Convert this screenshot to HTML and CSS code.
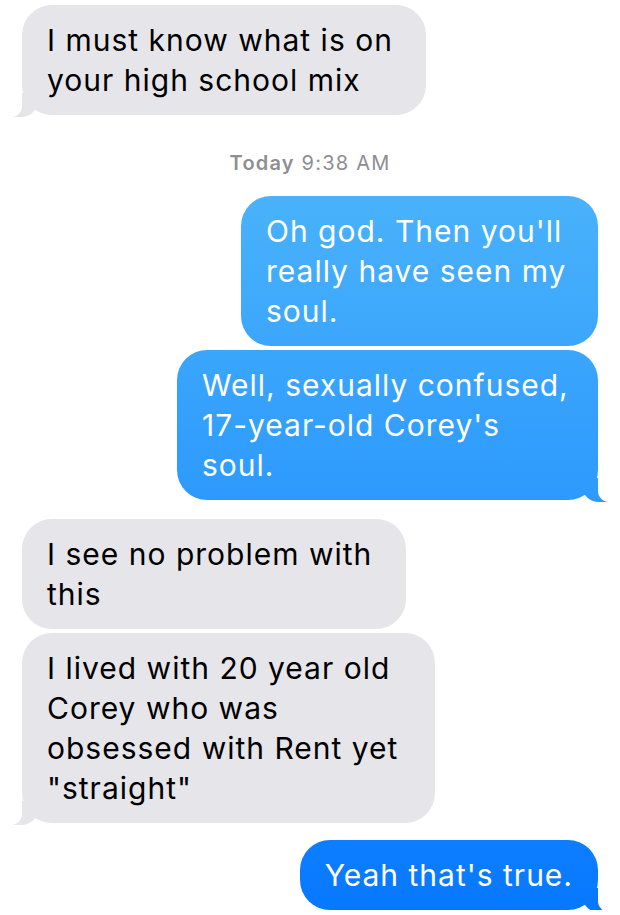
FILE: index.html
```
<!DOCTYPE html>
<html>
<head>
    <title>Messages</title>
    <link rel="stylesheet" href="styles.css">
</head>
<body>
    <div class="thread">
        <div class="bubble in first w1">I must know what is on<br>your high school mix</div>

        <div class="stamp"><strong>Today</strong> 9:38 AM</div>

        <div class="bubble out w2">Oh god. Then you'll<br>really have seen my<br>soul.</div>
        <div class="bubble out tail w3">Well, sexually confused,<br>17-year-old Corey's<br>soul.</div>

        <div class="bubble in w4 group">I see no problem with<br>this</div>
        <div class="bubble in tail w5">I lived with 20 year old<br>Corey who was<br>obsessed with Rent yet<br>"straight"</div>

        <div class="bubble out tail last group">Yeah that's true.</div>
    </div>
</body>
</html>
```

FILE: styles.css
```
body {
    margin: 0;
    background: #fff;
    font-family: Inter, "Noto Sans", sans-serif;
}

.thread {
    display: flex;
    flex-direction: column;
    padding: 5px 22px 0 22px;
}

.bubble {
    position: relative;
    box-sizing: border-box;
    padding: 15px 25px;
    font-size: 30px;
    line-height: 40px;
    letter-spacing: 1px;
    border-radius: 30px;
    margin-top: 4px;
}

.bubble.first {
    margin-top: 0;
}

.bubble.group {
    margin-top: 19px;
}

.bubble.last {
    margin-top: 17px;
}

.in {
    align-self: flex-start;
    background: #e5e5ea;
    color: #000;
}

.out {
    align-self: flex-end;
    color: #fff;
    background: linear-gradient(to bottom, #5cc2fa, #0678ff) fixed;
}

.w1 { width: 404px; }
.w2 { width: 357px; }
.w3 { width: 421px; }
.w4 { width: 384px; }
.w5 { width: 413px; }

/* tails: a filled corner, then a white mask carves the curve */
.in.first::before,
.in.tail::before,
.out.tail::before,
.in.first::after,
.in.tail::after,
.out.tail::after {
    content: "";
    position: absolute;
    bottom: -2px;
    height: 24px;
}

.in.first::before,
.in.tail::before {
    left: -11px;
    width: 26px;
    background: #e5e5ea;
    border-bottom-right-radius: 16px 14px;
}

.in.first::after,
.in.tail::after {
    left: -30px;
    width: 30px;
    background: #fff;
    border-bottom-right-radius: 11px;
}

.out.tail::before {
    right: -11px;
    width: 26px;
    background: linear-gradient(to bottom, #5cc2fa, #0678ff) fixed;
    border-bottom-left-radius: 16px 14px;
}

.out.tail::after {
    right: -30px;
    width: 30px;
    background: #fff;
    border-bottom-left-radius: 11px;
}

.stamp {
    text-align: center;
    color: #8e8e93;
    font-size: 20px;
    line-height: 22px;
    letter-spacing: 1.2px;
    margin: 37px 0 18px;
}

.stamp strong {
    font-weight: 600;
}
```
